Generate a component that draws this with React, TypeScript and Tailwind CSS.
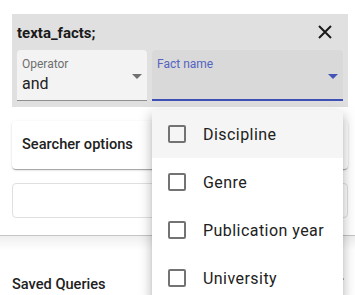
import { useState } from "react";

const options = ["Discipline", "Genre", "Publication year", "University"];

function CaretDown({ color }: { color: string }) {
  return (
    <svg width="10" height="5" viewBox="0 0 10 5">
      <path d="M0 0 L10 0 L5 5 Z" fill={color} />
    </svg>
  );
}

function FactMenu() {
  const [checked, setChecked] = useState<string[]>([]);
  const toggle = (o: string) =>
    setChecked((c) => (c.includes(o) ? c.filter((x) => x !== o) : [...c, o]));

  return (
    <div className="absolute left-[152px] top-[110px] w-[191px] bg-white rounded-b-[4px] shadow-[0px_5px_5px_-3px_rgba(0,0,0,0.2),0px_8px_10px_1px_rgba(0,0,0,0.14),0px_3px_14px_2px_rgba(0,0,0,0.12)]">
      {options.map((o, i) => (
        <div
          key={o}
          onClick={() => toggle(o)}
          className={
            "h-[48px] flex items-center pl-[16px] cursor-pointer " +
            (i === 0 ? "bg-[#f5f5f5]" : "bg-white")
          }
        >
          <div className="w-[18px] h-[18px] border-2 border-[#737373] rounded-[2px] flex items-center justify-center">
            {checked.includes(o) && <div className="w-[10px] h-[10px] bg-[#737373]" />}
          </div>
          <span className="ml-[17px] text-[16px] leading-[19px] tracking-[0.45px] text-[#212121]">
            {o}
          </span>
        </div>
      ))}
    </div>
  );
}

export default function App() {
  return (
    <div className="relative w-[355px] h-[295px] overflow-hidden bg-white font-['Roboto',sans-serif]">
      <div className="border-b border-[#c4c4c4] h-[236px]">
        <div className="px-[12px] pt-[14px]">
          {/* fact query panel */}
          <div className="w-[336px] h-[93px] bg-[#e0e0e0] px-[5px]">
            <div className="h-[36px] flex items-center justify-between">
              <span className="mt-[2px] text-[15px] leading-[20px] font-bold text-[#1a1a1a]">texta_facts;</span>
              <svg width="14" height="14" viewBox="0 0 14 14" className="mr-[11px]">
                <path d="M1 1 L13 13 M13 1 L1 13" stroke="#1a1a1a" strokeWidth="2" />
              </svg>
            </div>
            <div className="flex gap-[5px]">
              <div className="relative w-[130px] h-[51px] bg-[#f3f3f3] rounded-t-[4px] border-b border-[#8f8f8f] pl-[5px] pt-[8px]">
                <div className="text-[12px] leading-[12px] text-[#6f6f6f]">Operator</div>
                <div className="mt-[4px] text-[16px] leading-[19px] text-[#212121]">and</div>
                <div className="absolute left-[115px] top-[24px]">
                  <CaretDown color="#707070" />
                </div>
              </div>
              <div className="relative w-[191px] h-[51px] bg-[#d9d9d9] rounded-t-[4px] border-b-2 border-[#3f51b5] pl-[5px] pt-[8px]">
                <div className="text-[12px] leading-[12px] text-[#5563c1]">Fact name</div>
                <div className="absolute left-[176px] top-[24px]">
                  <CaretDown color="#4254b7" />
                </div>
              </div>
            </div>
          </div>

          {/* searcher options */}
          <div className="mt-[14px] w-[336px] h-[48px] bg-white rounded-[4px] flex items-center pl-[10px] shadow-[0px_2px_1px_-1px_rgba(0,0,0,0.2),0px_1px_1px_0px_rgba(0,0,0,0.14),0px_1px_3px_0px_rgba(0,0,0,0.12)]">
            <span className="text-[14.6px] font-medium text-[#212121]">Searcher options</span>
          </div>

          <div className="mt-[14px] w-[336px] h-[35px] border border-[#e0e0e0] rounded-[4px]" />
        </div>
      </div>

      <div className="h-[14px] bg-gradient-to-b from-[#efefef] to-white" />

      <div className="relative px-[12px] pt-[22px]">
        <span className="text-[14.6px] leading-[18px] font-medium text-[#212121]">Saved Queries</span>
        <svg width="24" height="24" viewBox="0 0 24 24" className="absolute left-[326px] top-[15px]">
          <path d="M7.41 15.41 12 10.83l4.59 4.58L18 14l-6-6-6 6z" fill="#6f6f6f" />
        </svg>
      </div>

      <FactMenu />
    </div>
  );
}
